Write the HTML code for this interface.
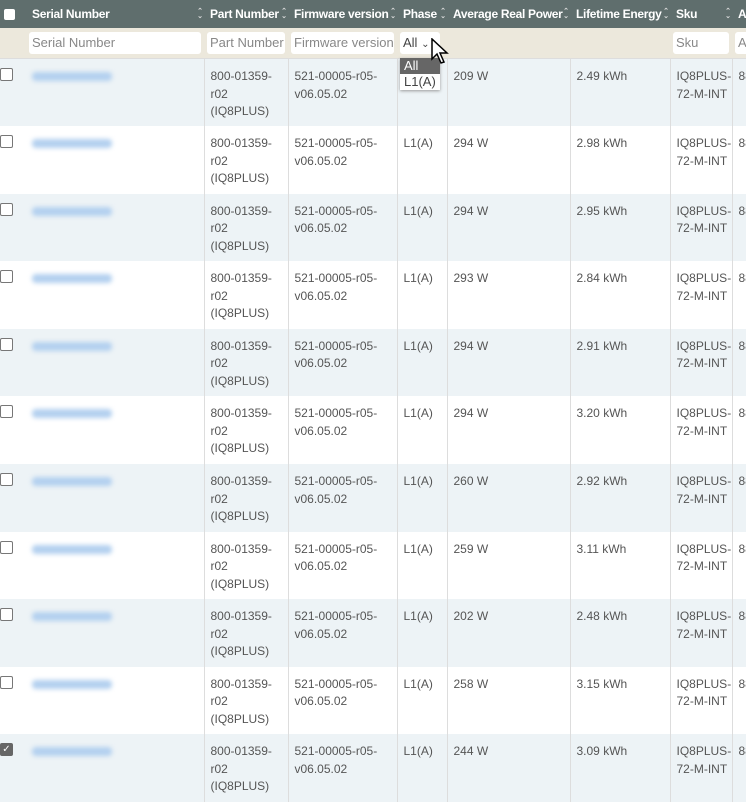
<!DOCTYPE html>
<html><head><style>
body{margin:0;width:746px;height:800px;overflow:hidden;font-family:"Liberation Sans",Arial,sans-serif;font-size:12px;color:#555;background:#fff}
table{border-collapse:collapse;table-layout:fixed;width:760px}
th{background:#5f6e6d;color:#fff;font-weight:bold;font-size:12px;letter-spacing:-0.3px;height:28px;text-align:left;padding:0 6px;white-space:nowrap;overflow:hidden;position:relative}
th .s{position:absolute;right:1px;top:9px;font-size:7px;color:#ddd;line-height:5px;letter-spacing:0}
tr.f td{background:#ece8dc;height:30px;padding:0 3px;vertical-align:middle;border-bottom:1px solid #ddd}
.in{background:#fff;border-radius:3px;height:22px;line-height:22px;color:#888;font-size:13px;padding:0 3px;white-space:nowrap;overflow:hidden}
tr.r td{height:67.6px;padding:0 6px;vertical-align:top;line-height:17.5px;padding-top:9px;box-sizing:border-box;border-right:1px solid #ddd;font-size:12px;white-space:nowrap;overflow:hidden}
tr.r:nth-child(odd) td{background:#edf3f6}
tr.r td:first-child{border-right:none}
.cb{width:11px;height:11px;border:1px solid #777;border-radius:2px;background:#fff;margin-top:0;margin-left:-6px}
.cbk{background:#666;border-color:#666;color:#fff;font-size:10px;line-height:11px;text-align:center}
.bl{display:block;width:80px;height:9px;margin-top:4px;background:#b3d0ef;border-radius:4px;filter:blur(2.5px)}
</style></head><body>
<table>
<colgroup><col style="width:26px"><col style="width:178px"><col style="width:84px"><col style="width:109px"><col style="width:50px"><col style="width:123px"><col style="width:100px"><col style="width:62px"><col style="width:28px"></colgroup>
<tr><th style="padding:0 4px"><div style="width:11px;height:11px;background:#fff;border-radius:2px"></div></th><th>Serial Number<span class="s">⌃<br>⌄</span></th><th>Part Number<span class="s">⌃<br>⌄</span></th><th>Firmware version<span class="s">⌃<br>⌄</span></th><th>Phase<span class="s">⌃<br>⌄</span></th><th>Average Real Power<span class="s">⌃<br>⌄</span></th><th>Lifetime Energy<span class="s">⌃<br>⌄</span></th><th>Sku<span class="s">⌃<br>⌄</span></th><th>A</th></tr>
<tr class="f"><td></td><td><div class="in">Serial Number</div></td><td><div class="in">Part Number</div></td><td><div class="in">Firmware version</div></td><td style="position:relative"><div class="in" style="width:34px;color:#444">All <span style="font-size:10px">⌄</span></div>
<div style="position:absolute;left:3px;top:30px;width:40px;background:#fff;box-shadow:0 1px 3px #999;z-index:5;font-size:13px;line-height:16px;color:#444"><div style="background:#666;color:#fff;padding-left:4px">All</div><div style="padding-left:4px">L1(A)</div></div>
<svg style="position:absolute;left:34px;top:10px;z-index:6" width="20" height="28" viewBox="0 0 20 28"><path d="M1 1 L1 21 L6 16 L10 25 L13 24 L9 15 L16 15 Z" fill="#fff" stroke="#000" stroke-width="1.5"/></svg></td><td></td><td></td><td><div class="in">Sku</div></td><td><div class="in">As</div></td></tr>
<tr class="r"><td><div class="cb"></div></td><td><span class="bl"></span></td><td>800-01359-<br>r02<br>(IQ8PLUS)</td><td>521-00005-r05-<br>v06.05.02</td><td></td><td>209 W</td><td>2.49 kWh</td><td>IQ8PLUS-<br>72-M-INT</td><td>88</td></tr>
<tr class="r"><td><div class="cb"></div></td><td><span class="bl"></span></td><td>800-01359-<br>r02<br>(IQ8PLUS)</td><td>521-00005-r05-<br>v06.05.02</td><td>L1(A)</td><td>294 W</td><td>2.98 kWh</td><td>IQ8PLUS-<br>72-M-INT</td><td>88</td></tr>
<tr class="r"><td><div class="cb"></div></td><td><span class="bl"></span></td><td>800-01359-<br>r02<br>(IQ8PLUS)</td><td>521-00005-r05-<br>v06.05.02</td><td>L1(A)</td><td>294 W</td><td>2.95 kWh</td><td>IQ8PLUS-<br>72-M-INT</td><td>88</td></tr>
<tr class="r"><td><div class="cb"></div></td><td><span class="bl"></span></td><td>800-01359-<br>r02<br>(IQ8PLUS)</td><td>521-00005-r05-<br>v06.05.02</td><td>L1(A)</td><td>293 W</td><td>2.84 kWh</td><td>IQ8PLUS-<br>72-M-INT</td><td>88</td></tr>
<tr class="r"><td><div class="cb"></div></td><td><span class="bl"></span></td><td>800-01359-<br>r02<br>(IQ8PLUS)</td><td>521-00005-r05-<br>v06.05.02</td><td>L1(A)</td><td>294 W</td><td>2.91 kWh</td><td>IQ8PLUS-<br>72-M-INT</td><td>88</td></tr>
<tr class="r"><td><div class="cb"></div></td><td><span class="bl"></span></td><td>800-01359-<br>r02<br>(IQ8PLUS)</td><td>521-00005-r05-<br>v06.05.02</td><td>L1(A)</td><td>294 W</td><td>3.20 kWh</td><td>IQ8PLUS-<br>72-M-INT</td><td>88</td></tr>
<tr class="r"><td><div class="cb"></div></td><td><span class="bl"></span></td><td>800-01359-<br>r02<br>(IQ8PLUS)</td><td>521-00005-r05-<br>v06.05.02</td><td>L1(A)</td><td>260 W</td><td>2.92 kWh</td><td>IQ8PLUS-<br>72-M-INT</td><td>88</td></tr>
<tr class="r"><td><div class="cb"></div></td><td><span class="bl"></span></td><td>800-01359-<br>r02<br>(IQ8PLUS)</td><td>521-00005-r05-<br>v06.05.02</td><td>L1(A)</td><td>259 W</td><td>3.11 kWh</td><td>IQ8PLUS-<br>72-M-INT</td><td>88</td></tr>
<tr class="r"><td><div class="cb"></div></td><td><span class="bl"></span></td><td>800-01359-<br>r02<br>(IQ8PLUS)</td><td>521-00005-r05-<br>v06.05.02</td><td>L1(A)</td><td>202 W</td><td>2.48 kWh</td><td>IQ8PLUS-<br>72-M-INT</td><td>88</td></tr>
<tr class="r"><td><div class="cb"></div></td><td><span class="bl"></span></td><td>800-01359-<br>r02<br>(IQ8PLUS)</td><td>521-00005-r05-<br>v06.05.02</td><td>L1(A)</td><td>258 W</td><td>3.15 kWh</td><td>IQ8PLUS-<br>72-M-INT</td><td>88</td></tr>
<tr class="r"><td><div class="cb cbk">✓</div></td><td><span class="bl"></span></td><td>800-01359-<br>r02<br>(IQ8PLUS)</td><td>521-00005-r05-<br>v06.05.02</td><td>L1(A)</td><td>244 W</td><td>3.09 kWh</td><td>IQ8PLUS-<br>72-M-INT</td><td>88</td></tr>
</table>
</body></html>
